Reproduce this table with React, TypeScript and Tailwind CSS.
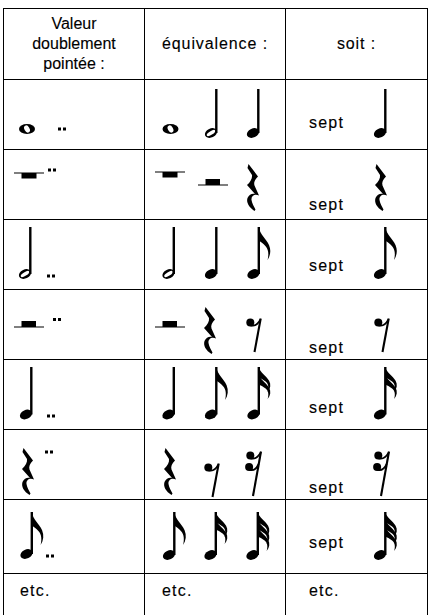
import React from "react";

type Glyph =
  | { k: "whole"; x: number; y: number }
  | { k: "note"; x: number; y: number; top: number; flags?: number; open?: boolean }
  | { k: "wrest" | "hrest" | "qrest" | "dots"; x: number; y: number }
  | { k: "rest"; x: number; y: number; n: number };

type Row = {
  h: number;
  cell: string;
  c1: Glyph[];
  c2: Glyph[];
  c3: Glyph[];
  sept: string;
};

// flag hanging from a stem, x0 = stem left edge, y0 = stem top
const flagPath = (x0: number, y0: number, len: number) =>
  `M${x0 + 1},${y0} ` +
  `C${x0 + 3},${y0 + len * 0.25} ${x0 + 8.5},${y0 + len * 0.35} ${x0 + 11.5},${y0 + len * 0.55} ` +
  `C${x0 + 13.5},${y0 + len * 0.7} ${x0 + 13},${y0 + len * 0.85} ${x0 + 10},${y0 + len} ` +
  `C${x0 + 11.3},${y0 + len * 0.83} ${x0 + 11},${y0 + len * 0.68} ${x0 + 8},${y0 + len * 0.58} ` +
  `C${x0 + 5.5},${y0 + len * 0.5} ${x0 + 3},${y0 + len * 0.45} ${x0 + 1},${y0 + len * 0.42} Z`;

const quarterRest =
  "M3.5,0 L13,12.5 C10,15.5 8.5,18.5 9.5,21.5 L14,31.5 C10,29.5 6,31.5 6.5,36 " +
  "C7,39.5 9,42.5 10.5,45.5 L9.5,47 C4,43.5 1,38.5 2.5,34 C4,30 8,29 10,30 " +
  "L2,21 C5.5,18 7.5,14 7,11 L2.5,4 Z";

function drawGlyph(g: Glyph, i: number) {
  switch (g.k) {
    case "whole":
      return (
        <g key={i}>
          <ellipse cx={g.x} cy={g.y} rx={8} ry={5} fill="#000" />
          <ellipse cx={g.x} cy={g.y} rx={2.5} ry={3.8} fill="#fff" transform={`rotate(-30 ${g.x} ${g.y})`} />
        </g>
      );
    case "note": {
      const sx = g.x + 4.1;
      const n = g.flags ?? 0;
      return (
        <g key={i}>
          <ellipse cx={g.x} cy={g.y} rx={6.4} ry={4.5} fill="#000" transform={`rotate(-25 ${g.x} ${g.y})`} />
          {g.open && (
            <ellipse cx={g.x} cy={g.y} rx={4.9} ry={1.8} fill="#fff" transform={`rotate(-32 ${g.x} ${g.y})`} />
          )}
          <rect x={sx} y={g.top} width={2.4} height={g.y - g.top} fill="#000" />
          {Array.from({ length: n }).map((_, k) => (
            <path key={k} d={flagPath(sx, g.top + k * 7, n === 1 ? 33 : 25)} fill="#000" />
          ))}
        </g>
      );
    }
    case "dots":
      return (
        <g key={i} fill="#000">
          <rect x={g.x} y={g.y - 1.5} width={3} height={3} />
          <rect x={g.x + 5} y={g.y - 1.5} width={3} height={3} />
        </g>
      );
    case "wrest":
      return (
        <g key={i} fill="#000">
          <rect x={g.x} y={g.y - 0.5} width={30} height={1} />
          <rect x={g.x + 7.5} y={g.y} width={15} height={5.5} />
        </g>
      );
    case "hrest":
      return (
        <g key={i} fill="#000">
          <rect x={g.x} y={g.y - 0.5} width={30} height={1} />
          <rect x={g.x + 7.5} y={g.y - 6} width={14.5} height={6} />
        </g>
      );
    case "qrest":
      return <path key={i} d={quarterRest} fill="#000" transform={`translate(${g.x} ${g.y})`} />;
    case "rest": {
      const H = g.n === 1 ? 34 : 45;
      const s0 = g.n === 1 ? 14.7 : 15;
      const s1 = g.n === 1 ? 8.5 : 7;
      const stemX = (y: number) => s0 + ((s1 - s0) * y) / H;
      return (
        <g key={i} transform={`translate(${g.x} ${g.y})`}>
          <line x1={s0} y1={0.5} x2={s1} y2={H} stroke="#000" strokeWidth={2.1} />
          {Array.from({ length: g.n }).map((_, k) => {
            const dx = 4.3 - k * 1.2;
            const dy = 4.4 + k * 11.5;
            const ey = dy - 3;
            return (
              <g key={k}>
                <circle cx={dx} cy={dy} r={4} fill="#000" />
                <path
                  d={`M${dx},${dy + 2.8} Q${dx + 6},${dy + 5} ${stemX(ey)},${ey}`}
                  stroke="#000"
                  strokeWidth={1.8}
                  fill="none"
                />
              </g>
            );
          })}
        </g>
      );
    }
  }
}

const rows: Row[] = [
  {
    h: 69,
    cell: "h-[70px]",
    c1: [{ k: "whole", x: 23, y: 49 }, { k: "dots", x: 54, y: 49 }],
    c2: [
      { k: "whole", x: 25.5, y: 49 },
      { k: "note", x: 66, y: 53, top: 9, open: true },
      { k: "note", x: 108, y: 53, top: 9 },
    ],
    c3: [{ k: "note", x: 94, y: 53, top: 9 }],
    sept: "mt-[35px]",
  },
  {
    h: 69,
    cell: "h-[70px]",
    c1: [{ k: "wrest", x: 10, y: 23 }, { k: "dots", x: 44, y: 20 }],
    c2: [
      { k: "wrest", x: 10, y: 22 },
      { k: "hrest", x: 53, y: 35 },
      { k: "qrest", x: 100, y: 14 },
    ],
    c3: [{ k: "qrest", x: 87, y: 14 }],
    sept: "mt-[47px]",
  },
  {
    h: 69,
    cell: "h-[70px]",
    c1: [{ k: "note", x: 21, y: 54, top: 7, open: true }, { k: "dots", x: 43, y: 56 }],
    c2: [
      { k: "note", x: 23.5, y: 54, top: 7, open: true },
      { k: "note", x: 66, y: 54, top: 7 },
      { k: "note", x: 108.5, y: 54, top: 7, flags: 1 },
    ],
    c3: [{ k: "note", x: 94, y: 54, top: 7, flags: 1 }],
    sept: "mt-[38px]",
  },
  {
    h: 69,
    cell: "h-[70px]",
    c1: [{ k: "hrest", x: 10, y: 37 }, { k: "dots", x: 49, y: 29.5 }],
    c2: [
      { k: "hrest", x: 10, y: 37 },
      { k: "qrest", x: 57, y: 17 },
      { k: "rest", x: 101, y: 28, n: 1 },
    ],
    c3: [{ k: "rest", x: 88, y: 28, n: 1 }],
    sept: "mt-[50px]",
  },
  {
    h: 69,
    cell: "h-[70px]",
    c1: [{ k: "note", x: 22, y: 54.5, top: 7 }, { k: "dots", x: 43, y: 56 }],
    c2: [
      { k: "note", x: 23.5, y: 54.5, top: 7 },
      { k: "note", x: 66, y: 54.5, top: 7, flags: 1 },
      { k: "note", x: 108.5, y: 54.5, top: 7, flags: 2 },
    ],
    c3: [{ k: "note", x: 94, y: 54.5, top: 7, flags: 2 }],
    sept: "mt-[40px]",
  },
  {
    h: 69,
    cell: "h-[70px]",
    c1: [{ k: "qrest", x: 16, y: 18 }, { k: "dots", x: 41, y: 22 }],
    c2: [
      { k: "qrest", x: 17, y: 18 },
      { k: "rest", x: 59, y: 33, n: 1 },
      { k: "rest", x: 101, y: 21, n: 2 },
    ],
    c3: [{ k: "rest", x: 88, y: 21, n: 2 }],
    sept: "mt-[50px]",
  },
  {
    h: 73,
    cell: "h-[74px]",
    c1: [{ k: "note", x: 22.5, y: 54, top: 12, flags: 1 }, { k: "dots", x: 42, y: 56 }],
    c2: [
      { k: "note", x: 24, y: 55, top: 12, flags: 1 },
      { k: "note", x: 65.5, y: 55, top: 12, flags: 2 },
      { k: "note", x: 107.5, y: 55, top: 12, flags: 3 },
    ],
    c3: [{ k: "note", x: 94, y: 55, top: 12, flags: 3 }],
    sept: "mt-[35px]",
  },
];

const cellBase = "border-r border-b border-black";

export default function App() {
  return (
    <div className="min-h-[615px] bg-white pl-[3px] pt-[8px] font-['Liberation_Sans',Arial,sans-serif] text-[16px] text-black [-webkit-text-stroke:0.12px_#000]">
      <div className="grid w-[425px] grid-cols-[141px_141px_142px] border-l border-t border-black">
        {/* header */}
        <div className={`${cellBase} flex h-[71px] flex-col items-center justify-center leading-[20px]`}>
          <span>Valeur</span>
          <span>doublement</span>
          <span>pointée :</span>
        </div>
        <div className={`${cellBase} flex h-[71px] items-center justify-center tracking-[0.9px]`}>
          équivalence :
        </div>
        <div className={`${cellBase} flex h-[71px] items-center justify-center tracking-[0.9px]`}>
          soit :
        </div>

        {rows.map((r, ri) => (
          <React.Fragment key={ri}>
            <div className={`${cellBase} ${r.cell}`}>
              <svg width={140} height={r.h} className="block">
                {r.c1.map(drawGlyph)}
              </svg>
            </div>
            <div className={`${cellBase} ${r.cell}`}>
              <svg width={140} height={r.h} className="block">
                {r.c2.map(drawGlyph)}
              </svg>
            </div>
            <div className={`${cellBase} ${r.cell} flex items-start`}>
              <span className={`w-[80px] shrink-0 pl-[23px] leading-[16px] tracking-[1.2px] ${r.sept}`}>sept</span>
              <svg width={61} height={r.h} viewBox={`80 0 61 ${r.h}`} className="block shrink-0">
                {r.c3.map(drawGlyph)}
              </svg>
            </div>
          </React.Fragment>
        ))}

        {/* etc. */}
        <div className={`${cellBase} h-[50px] pl-[16px] pt-[9px] leading-[16px] tracking-[1.2px]`}>etc.</div>
        <div className={`${cellBase} h-[50px] pl-[17px] pt-[9px] leading-[16px] tracking-[1.2px]`}>etc.</div>
        <div className={`${cellBase} h-[50px] pl-[23px] pt-[9px] leading-[16px] tracking-[1.2px]`}>etc.</div>
      </div>
    </div>
  );
}
